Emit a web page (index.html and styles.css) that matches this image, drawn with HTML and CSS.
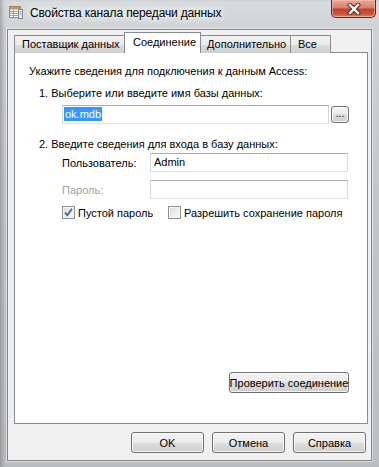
FILE: index.html
```html
<!DOCTYPE html>
<html lang="ru">
<head>
<meta charset="utf-8">
<title>Свойства канала передачи данных</title>
<link rel="stylesheet" href="styles.css">
</head>
<body>
<div class="window">
  <div class="titlebar">
    <svg class="app-icon" width="16" height="16" viewBox="0 0 16 16">
      <rect x="1.5" y="2.5" width="11" height="11" fill="#fff" stroke="#8a8a8a"/>
      <rect x="2" y="3" width="10" height="2.5" fill="#e48a3c"/>
      <line x1="2" y1="7.5" x2="12" y2="7.5" stroke="#9aa6b4"/>
      <line x1="2" y1="9.5" x2="12" y2="9.5" stroke="#9aa6b4"/>
      <line x1="2" y1="11.5" x2="12" y2="11.5" stroke="#9aa6b4"/>
      <line x1="5.5" y1="6" x2="5.5" y2="13" stroke="#9aa6b4"/>
      <rect x="10.5" y="5.5" width="4" height="9" fill="#e9edf2" stroke="#7d8896"/>
      <line x1="11.5" y1="8" x2="13.5" y2="8" stroke="#7d8896"/>
      <line x1="11.5" y1="10" x2="13.5" y2="10" stroke="#7d8896"/>
    </svg>
    <span class="title">Свойства канала передачи данных</span>
    <div class="close">
      <svg width="14" height="12" viewBox="0 0 14 12">
        <path d="M3 2 L11 10 M11 2 L3 10" stroke="#4b2520" stroke-width="4.4" stroke-linecap="square"/>
        <path d="M3 2 L11 10 M11 2 L3 10" stroke="#fff" stroke-width="2.4" stroke-linecap="square"/>
      </svg>
    </div>
  </div>
  <div class="client">
    <div class="tabs">
      <div class="tab tab-provider">Поставщик данных</div>
      <div class="tab tab-active">Соединение</div>
      <div class="tab tab-advanced">Дополнительно</div>
      <div class="tab tab-all">Все</div>
    </div>
    <div class="panel">
      <div class="intro">Укажите сведения для подключения к данным Access:</div>
      <div class="step step-1">1. Выберите или введите имя базы данных:</div>
      <div class="db-row">
        <div class="textbox db-box"><span class="selected">ok.mdb</span></div>
        <div class="btn browse">...</div>
      </div>
      <div class="step step-2">2. Введите сведения для входа в базу данных:</div>
      <div class="field field-user">
        <span class="field-label">Пользователь:</span>
        <div class="textbox">Admin</div>
      </div>
      <div class="field field-pass">
        <span class="field-label disabled">Пароль:</span>
        <div class="textbox"></div>
      </div>
      <div class="checks">
        <label class="check check-blank">
          <span class="box">
            <svg width="11" height="11" viewBox="0 0 11 11">
              <path d="M2 5.5 L4.3 8.3 L9 1.8" fill="none" stroke="#4c6191" stroke-width="1.8"/>
            </svg>
          </span>
          <span>Пустой пароль</span>
        </label>
        <label class="check">
          <span class="box"></span>
          <span>Разрешить сохранение пароля</span>
        </label>
      </div>
      <div class="btn test">Проверить соединение</div>
    </div>
    <div class="footer">
      <div class="btn dlg">OK</div>
      <div class="btn dlg">Отмена</div>
      <div class="btn dlg">Справка</div>
    </div>
  </div>
</div>
</body>
</html>
```

FILE: styles.css
```css
* { box-sizing: border-box; }
html, body { margin: 0; padding: 0; }
body {
  width: 379px;
  height: 467px;
  overflow: hidden;
  font-family: "Liberation Sans", Arial, sans-serif;
  font-size: 11px;
  color: #000;
}
.window {
  width: 379px;
  height: 467px;
  display: flex;
  flex-direction: column;
  padding: 0 7px 6px 7px;
  background: linear-gradient(to bottom, #d9dcdf 0, #cfd2d5 30px, #c4c7ca 200px, #bcbfc2 100%);
  box-shadow: inset 4px 0 4px -2px rgba(90, 90, 90, 0.45);
}
.titlebar {
  height: 29px;
  flex: 0 0 29px;
  display: flex;
  align-items: flex-start;
}
.app-icon {
  margin: 4px 0 0 1px;
  flex: 0 0 16px;
}
.title {
  margin: 5px 0 0 6px;
  font-size: 12px;
  letter-spacing: -0.15px;
  line-height: 16px;
  color: #000;
  text-shadow: 0 0 6px #fff, 0 0 10px #fff, 0 0 14px rgba(255,255,255,0.9);
}
.close {
  margin-left: auto;
  margin-right: -4px;
  width: 45px;
  height: 18px;
  border: 1px solid #5a2a22;
  border-top: none;
  border-radius: 0 0 5px 5px;
  background: linear-gradient(to bottom, #e9a99b 0, #d8806f 45%, #c0402d 55%, #cc5a3e 85%, #e0866a 100%);
  box-shadow: inset 0 0 0 1px rgba(255, 200, 190, 0.55);
  display: flex;
  align-items: center;
  justify-content: center;
}
.client {
  flex: 1;
  display: flex;
  flex-direction: column;
  background: #f0f0f0;
  border: 1px solid #858585;
  box-shadow: 0 0 0 1px rgba(255, 255, 255, 0.45);
  padding: 3px 3px 0 6px;
}
.tabs {
  display: flex;
  align-items: flex-end;
  height: 20px;
  flex: 0 0 20px;
  position: relative;
  z-index: 1;
  margin-bottom: -1px;
}
.tab {
  height: 18px;
  line-height: 16px;
  border: 1px solid #898c95;
  border-bottom: none;
  border-right: none;
  padding-left: 7px;
  white-space: nowrap;
  background: linear-gradient(to bottom, #f2f2f2 0, #ebebeb 50%, #dddddd 50%, #cfcfcf 100%);
}
.tab-provider { width: 110px; }
.tab-active {
  width: 77px;
  height: 21px;
  line-height: 19px;
  padding-left: 8px;
  border-right: 1px solid #898c95;
  background: #fff;
}
.tab-advanced { width: 89px; border-left: none; padding-left: 6px; }
.tab-all { width: 41px; border-right: 1px solid #898c95; }
.panel {
  flex: 1;
  display: flex;
  flex-direction: column;
  background: #fff;
  border: 1px solid #898c95;
  padding: 11px 18px 0 14px;
}
.intro, .step {
  line-height: 14px;
  white-space: nowrap;
}
.step { margin-left: 10px; }
.step-1 { margin-top: 8px; }
.step-2 { margin-top: 13px; }
.db-row {
  display: flex;
  margin: 5px 0 0 33px;
  height: 19px;
}
.textbox {
  height: 19px;
  flex: 1;
  border: 1px solid;
  border-color: #abadb3 #d5d8de #dfe3e8 #d5d8de;
  background: #fff;
  padding: 0 0 0 3px;
  line-height: 17px;
  white-space: nowrap;
}
.db-box { padding-left: 1px; }
.selected {
  background: #3399ff;
  color: #fff;
  padding: 1px 1px;
}
.btn {
  border: 1px solid #707070;
  border-radius: 3px;
  background: linear-gradient(to bottom, #f2f2f2 0, #ebebeb 50%, #dddddd 50%, #cfcfcf 100%);
  box-shadow: inset 0 0 0 1px rgba(255, 255, 255, 0.75);
  display: flex;
  align-items: center;
  justify-content: center;
  white-space: nowrap;
  line-height: 14px;
}
.browse {
  width: 18px;
  height: 17px;
  margin: 1px 0 0 2px;
  padding-bottom: 3px;
  align-items: flex-end;
  font-size: 10px;
  line-height: 10px;
}
.field {
  display: flex;
  align-items: center;
  margin-left: 33px;
  height: 19px;
}
.field-user { margin-top: 2px; }
.field-pass { margin-top: 8px; }
.field-label { width: 88px; flex: 0 0 88px; }
.field .textbox { margin-right: 1px; }
.disabled { color: #a0a0a0; }
.checks {
  display: flex;
  margin: 7px 0 0 33px;
  height: 13px;
  align-items: center;
  white-space: nowrap;
}
.check {
  display: flex;
  align-items: center;
  line-height: 14px;
}
.check-blank { width: 106px; }
.box {
  width: 13px;
  height: 13px;
  flex: 0 0 13px;
  border: 1px solid #8e8f8f;
  background: linear-gradient(135deg, #dcdcdc 0, #f4f4f4 80%);
  box-shadow: inset 0 0 0 1px #f6f6f6;
  margin-right: 3px;
  display: flex;
  align-items: center;
  justify-content: center;
}
.test {
  margin-top: auto;
  margin-bottom: 30px;
  align-self: flex-end;
  width: 120px;
  height: 21px;
}
.footer {
  flex: 0 0 36px;
  display: flex;
  justify-content: flex-end;
  gap: 8px;
  padding: 8px 2px 7px 0;
}
.dlg {
  width: 73px;
  height: 21px;
}
```
